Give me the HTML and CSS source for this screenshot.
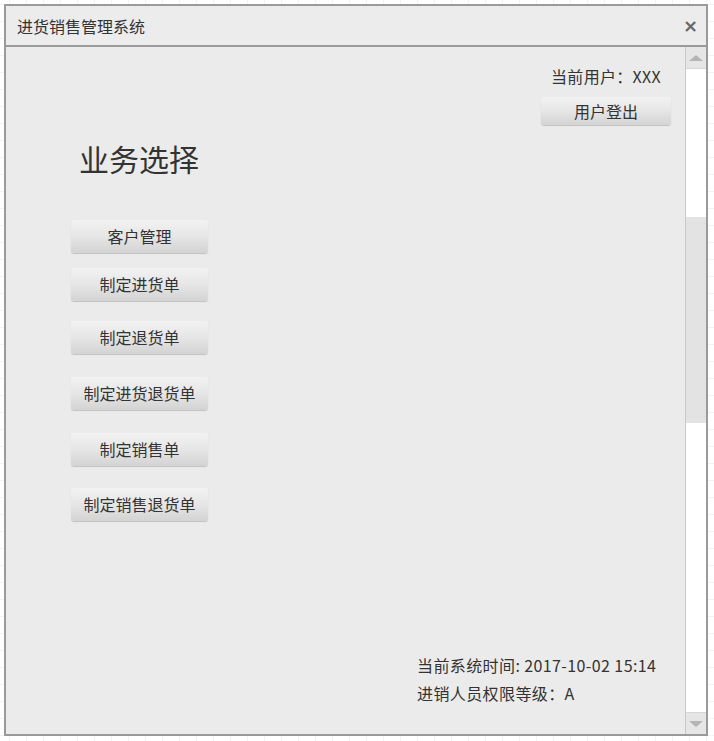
FILE: index.html
```html
<!DOCTYPE html>
<html lang="zh">
<head>
<meta charset="utf-8">
<title>进货销售管理系统</title>
<link rel="stylesheet" href="styles.css">
</head>
<body>
<div class="window">
  <div class="titlebar">
    <span class="title">进货销售管理系统</span>
    <span class="close">×</span>
  </div>
  <div class="body">
    <div class="main">
      <div class="top">
        <div class="user">
          <div class="user-text">当前用户：XXX</div>
          <button class="btn btn-logout">用户登出</button>
        </div>
      </div>
      <h1 class="heading">业务选择</h1>
      <div class="menu">
        <button class="btn menu-btn m1">客户管理</button>
        <button class="btn menu-btn m2">制定进货单</button>
        <button class="btn menu-btn m3">制定退货单</button>
        <button class="btn menu-btn m4">制定进货退货单</button>
        <button class="btn menu-btn m5">制定销售单</button>
        <button class="btn menu-btn m6">制定销售退货单</button>
      </div>
      <div class="spacer"></div>
      <div class="footer">
        <div class="info">当前系统时间: 2017-10-02 15:14</div>
        <div class="info">进销人员权限等级：A</div>
      </div>
    </div>
    <div class="scrollbar">
      <div class="arrow arrow-up"><span class="tri-up"></span></div>
      <div class="track">
        <div class="track-top"></div>
        <div class="thumb"></div>
        <div class="track-bottom"></div>
      </div>
      <div class="arrow arrow-down"><span class="tri-down"></span></div>
    </div>
  </div>
</div>
</body>
</html>
```

FILE: styles.css
```css
html, body {
  margin: 0;
  padding: 0;
}
body {
  width: 714px;
  height: 741px;
  background-color: #ffffff;
  background-image:
    linear-gradient(to right, #f3f3f3 1px, transparent 1px),
    linear-gradient(to bottom, #f3f3f3 1px, transparent 1px);
  background-size: 17px 17px;
  background-position: 9px 4px;
  font-family: "Noto Sans CJK SC", "Noto Sans", sans-serif;
  color: #333333;
  overflow: hidden;
}
.window {
  position: relative;
  margin: 4px 0 0 4px;
  width: 700px;
  height: 728px;
  border: 2px solid #9a9a9a;
  background: #ebebeb;
  display: flex;
  flex-direction: column;
}
.titlebar {
  height: 39px;
  border-bottom: 2px solid #9a9a9a;
  background: #ececec;
  display: flex;
  align-items: center;
  justify-content: space-between;
  padding: 0 8px 0 11px;
  flex: none;
}
.title {
  font-size: 16px;
  line-height: 20px;
  color: #333;
}
.close {
  font-family: "DejaVu Sans", sans-serif;
  font-size: 18px;
  font-weight: bold;
  color: #666;
  line-height: 20px;
}
.body {
  flex: 1;
  display: flex;
  min-height: 0;
}
.main {
  flex: 1;
  display: flex;
  flex-direction: column;
}
.top {
  display: flex;
  justify-content: flex-end;
  padding: 19px 14px 0 0;
}
.user {
  width: 130px;
  display: flex;
  flex-direction: column;
  align-items: center;
}
.user-text {
  font-size: 16px;
  line-height: 20px;
  letter-spacing: 0.3px;
  color: #333;
  margin-bottom: 11px;
  white-space: nowrap;
}
.btn {
  font-family: "Noto Sans CJK SC", "Noto Sans", sans-serif;
  font-size: 16px;
  color: #333;
  border: none;
  border-radius: 3px;
  background: linear-gradient(to bottom, #f2f2f2 0%, #e6e6e6 50%, #d3d3d3 100%);
  box-shadow: 0 1px 1px rgba(0, 0, 0, 0.18);
  padding: 0;
  margin: 0;
  cursor: default;
}
.btn-logout {
  width: 130px;
  height: 28px;
  line-height: 28px;
}
.heading {
  margin: 13px 0 0 73px;
  font-size: 30px;
  font-weight: normal;
  line-height: 40px;
  color: #333;
}
.menu {
  display: flex;
  flex-direction: column;
  align-items: flex-start;
  padding-left: 65px;
}
.menu-btn {
  width: 137px;
  height: 33px;
  line-height: 33px;
}
.m1 { margin-top: 42px; }
.m2 { margin-top: 15px; }
.m3 { margin-top: 20px; }
.m4 { margin-top: 23px; }
.m5 { margin-top: 23px; }
.m6 { margin-top: 22px; }
.spacer {
  flex: 1;
}
.footer {
  padding: 0 0 27px 411px;
}
.info {
  font-size: 16px;
  line-height: 28px;
  letter-spacing: 0.4px;
  color: #333;
  white-space: nowrap;
}
.scrollbar {
  width: 20px;
  border-left: 1px solid #c8c8c8;
  display: flex;
  flex-direction: column;
  background: #ffffff;
}
.arrow {
  height: 21px;
  background: #e6e6e6;
  display: flex;
  align-items: center;
  justify-content: center;
  flex: none;
}
.arrow-up {
  border-bottom: 1px solid #d6d6d6;
}
.arrow-down {
  border-top: 1px solid #d6d6d6;
}
.tri-up {
  width: 0;
  height: 0;
  border-left: 7px solid transparent;
  border-right: 7px solid transparent;
  border-bottom: 6px solid #b4b4b4;
}
.tri-down {
  width: 0;
  height: 0;
  border-left: 7px solid transparent;
  border-right: 7px solid transparent;
  border-top: 6px solid #b4b4b4;
}
.track {
  flex: 1;
  display: flex;
  flex-direction: column;
}
.track-top {
  height: 148px;
  flex: none;
}
.thumb {
  height: 206px;
  background: #e3e3e3;
  flex: none;
}
.track-bottom {
  flex: 1;
}
```
